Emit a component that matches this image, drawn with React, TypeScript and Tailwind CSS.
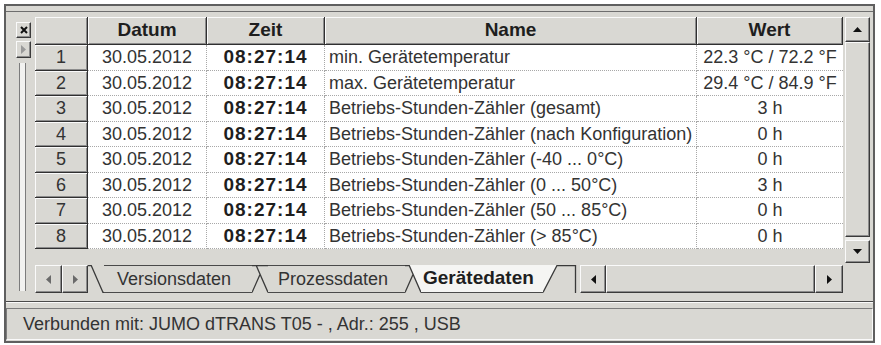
import React from "react";

const raised =
  "bg-[#d9d8d3] border border-t-[#fafafa] border-l-[#fafafa] border-r-[#3a3a3a] border-b-[#3a3a3a] shadow-[inset_-1px_-1px_0_#8c8c8c]";

const rows = [
  { date: "30.05.2012", time: "08:27:14", name: "min. Gerätetemperatur", value: "22.3 °C / 72.2 °F" },
  { date: "30.05.2012", time: "08:27:14", name: "max. Gerätetemperatur", value: "29.4 °C / 84.9 °F" },
  { date: "30.05.2012", time: "08:27:14", name: "Betriebs-Stunden-Zähler (gesamt)", value: "3 h" },
  { date: "30.05.2012", time: "08:27:14", name: "Betriebs-Stunden-Zähler (nach Konfiguration)", value: "0 h" },
  { date: "30.05.2012", time: "08:27:14", name: "Betriebs-Stunden-Zähler (-40 ... 0°C)", value: "0 h" },
  { date: "30.05.2012", time: "08:27:14", name: "Betriebs-Stunden-Zähler (0 ... 50°C)", value: "3 h" },
  { date: "30.05.2012", time: "08:27:14", name: "Betriebs-Stunden-Zähler (50 ... 85°C)", value: "0 h" },
  { date: "30.05.2012", time: "08:27:14", name: "Betriebs-Stunden-Zähler (> 85°C)", value: "0 h" },
];

function Tri({ dir, color = "#111" }: { dir: "up" | "down" | "left" | "right"; color?: string }) {
  const vertical = dir === "up" || dir === "down";
  const pts = {
    up: "0,5 9,5 4.5,0",
    down: "0,0 9,0 4.5,5",
    left: "5,0 5,9 0,4.5",
    right: "0,0 0,9 5,4.5",
  }[dir];
  return (
    <svg width={vertical ? 9 : 5} height={vertical ? 5 : 9}>
      <polygon points={pts} fill={color} />
    </svg>
  );
}

function HeaderCell({ w, children }: { w: string; children?: React.ReactNode }) {
  return (
    <div
      className={`${w} h-full flex items-center justify-center font-bold text-[19px] text-[#1e1e1e] border-r border-b border-[#303030] shadow-[inset_1px_1px_0_#fafafa,inset_-1px_-1px_0_#8c8c8c]`}
    >
      {children}
    </div>
  );
}

export default function App() {
  return (
    <div className="w-[881px] h-[345px] bg-white pt-[4px] pl-[4px] font-['Liberation_Sans',Arial,sans-serif] text-[#333]">
      <div className="w-[871px] h-[339px] border-2 border-[#5f5f5f] bg-[#d9d8d3] flex flex-col">
        <div className="h-[5px] flex-shrink-0" />

        {/* Main panel */}
        <div className="h-[290px] border-t border-[#6e6e6e] flex flex-shrink-0">
          {/* Left strip */}
          <div className="w-[29px] flex flex-col items-start pl-[10px] pt-[10px]">
            <div className={`w-[15px] h-[16px] flex items-center justify-center ${raised}`}>
              <svg width="8" height="8">
                <path d="M1 1 L7 7 M7 1 L1 7" stroke="#111" strokeWidth="2" />
              </svg>
            </div>
            <div className={`mt-[3px] w-[15px] h-[17px] flex items-center justify-center ${raised}`}>
              <Tri dir="right" color="#9a9a9a" />
            </div>
            <div className="mt-[5px] ml-[3px] w-[7px] h-[228px] border-l border-r border-[#7c7c7c] bg-[#f2f2f0]" />
          </div>

          {/* Grid + scrollbars + tabs */}
          <div className="flex flex-col pt-[5px]">
            <div className="flex h-[246px]">
              <div className="w-[808px] h-full flex flex-col">
                {/* Header */}
                <div className="flex h-[28px] flex-shrink-0">
                  <HeaderCell w="w-[53px]" />
                  <HeaderCell w="w-[119px]">Datum</HeaderCell>
                  <HeaderCell w="w-[118px]">Zeit</HeaderCell>
                  <HeaderCell w="w-[372px]">Name</HeaderCell>
                  <HeaderCell w="w-[146px]">Wert</HeaderCell>
                </div>
                {rows.map((r, i) => (
                  <div key={i} className={`flex flex-shrink-0 text-[18px] ${i % 2 === 0 ? "h-[26px]" : "h-[25px]"}`}>
                    <div className="w-[53px] h-full flex items-center justify-center border-r border-b border-[#303030] shadow-[inset_1px_1px_0_#fafafa,inset_-1px_-1px_0_#8c8c8c]">
                      {i + 1}
                    </div>
                    <div className="w-[119px] h-full bg-white flex items-center justify-center border-r border-b border-dotted border-[#a8a8a8]">
                      {r.date}
                    </div>
                    <div className="w-[118px] h-full bg-white flex items-center justify-center font-bold text-[19px] tracking-[1px] text-[#1e1e1e] border-r border-b border-dotted border-[#a8a8a8]">
                      {r.time}
                    </div>
                    <div className="w-[372px] h-full bg-white flex items-center pl-[4px] whitespace-nowrap border-r border-b border-dotted border-[#a8a8a8]">
                      {r.name}
                    </div>
                    <div className="w-[146px] h-full bg-white flex items-center justify-center whitespace-nowrap border-b border-dotted border-[#a8a8a8]">
                      {r.value}
                    </div>
                  </div>
                ))}
              </div>

              {/* Vertical scrollbar */}
              <div className="ml-[2px] w-[25px] h-full flex flex-col bg-[#ebebe8]">
                <div className={`h-[25px] flex items-center justify-center flex-shrink-0 ${raised}`}>
                  <Tri dir="up" />
                </div>
                <div className={`h-[195px] flex-shrink-0 ${raised}`} />
                <div className="flex-1" />
                <div className={`h-[23px] flex items-center justify-center flex-shrink-0 ${raised}`}>
                  <Tri dir="down" />
                </div>
              </div>
            </div>

            {/* Tabs row */}
            <div className="mt-[2px] flex h-[28px] items-stretch">
              <div className={`w-[27px] flex items-center justify-center ${raised}`}>
                <Tri dir="left" color="#6a6a6a" />
              </div>
              <div className={`w-[26px] flex items-center justify-center ${raised}`}>
                <Tri dir="right" color="#6a6a6a" />
              </div>

              <div className="flex h-[28px]">
                <svg width="16" height="28" className="flex-shrink-0">
                  <path d="M0 0.5 L3 0.5 M3 0 L15 27.5 L16 27.5" stroke="#3a3a3a" strokeWidth="1.3" fill="none" />
                </svg>
                <div className="w-[148px] h-full flex items-center pl-[13px] text-[18px] border-t border-b border-[#4a4a4a] whitespace-nowrap">
                  Versionsdaten
                </div>
                <svg width="16" height="28" className="flex-shrink-0">
                  <path d="M0 0.5 L16 0.5 M4 0 L16 27.5 M0 27.5 L8 9.5" stroke="#3a3a3a" strokeWidth="1.3" fill="none" />
                </svg>
                <div className="w-[137px] h-full flex items-center pl-[10px] text-[18px] border-t border-b border-[#4a4a4a] whitespace-nowrap">
                  Prozessdaten
                </div>
                <svg width="16" height="28" className="flex-shrink-0">
                  <polygon points="4,0 16,0 16,28" fill="#f5f5f3" />
                  <path d="M0 0.5 L4 0.5 M4 0 L16 27.5 M0 27.5 L8 9.5 M16 27.5 L16 27.5" stroke="#3a3a3a" strokeWidth="1.3" fill="none" />
                </svg>
                <div className="w-[122px] h-full flex items-center pl-[2px] font-bold text-[19px] text-[#1e1e1e] bg-[#f5f5f3] border-b border-[#4a4a4a] whitespace-nowrap">
                  Gerätedaten
                </div>
                <svg width="34" height="28" className="flex-shrink-0">
                  <polygon points="0,0 14,0 0,28" fill="#f5f5f3" />
                  <path d="M0 27.5 L14 0.5 L32.5 0.5 L32.5 28" stroke="#3a3a3a" strokeWidth="1.3" fill="none" />
                </svg>
              </div>

              {/* Horizontal scrollbar */}
              <div className="ml-[3px] w-[263px] flex">
                <div className={`w-[26px] flex items-center justify-center ${raised}`}>
                  <Tri dir="left" />
                </div>
                <div className={`flex-1 ${raised}`} />
                <div className={`w-[28px] flex items-center justify-center ${raised}`}>
                  <Tri dir="right" />
                </div>
              </div>
            </div>
          </div>
        </div>

        {/* Separator */}
        <div className="h-[2px] border-t border-[#4a4a4a] border-b border-b-[#fafafa] flex-shrink-0" />

        {/* Status bar */}
        <div className="mt-[5px] h-[32px] border border-t-[#7c7c7c] border-l-[#7c7c7c] border-r-[#fafafa] border-b-[#fafafa] flex items-center pl-[16px] text-[18px] whitespace-nowrap flex-shrink-0">
          Verbunden mit: JUMO dTRANS T05 - , Adr.: 255 , USB
        </div>
      </div>
    </div>
  );
}
